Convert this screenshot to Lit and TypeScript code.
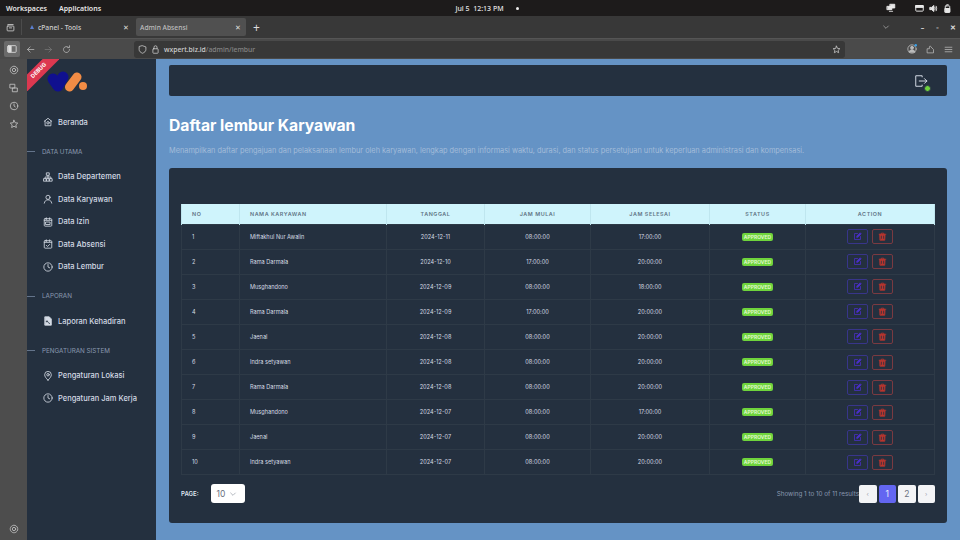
import { LitElement, html, css, svg } from 'lit';
import { customElement } from 'lit/decorators.js';

const icon = (body: unknown, size = 10, stroke = 'currentColor', sw = 2) => html`
  <svg width=${size} height=${size} viewBox="0 0 24 24" fill="none" stroke=${stroke} stroke-width=${sw}
    stroke-linecap="round" stroke-linejoin="round">${body}</svg>`;

const icons = {
  home: svg`<path d="M3 10.500 12 3l9 7.500"/><path d="M5 9v12h14V9"/><circle cx="12" cy="14" r="3"/>`,
  org: svg`<rect x="9" y="2" width="6" height="6"/><rect x="2" y="16" width="6" height="6"/><rect x="16" y="16" width="6" height="6"/><rect x="9" y="16" width="6" height="6"/><path d="M12 8v8M5 16v-4h14v4"/>`,
  user: svg`<circle cx="12" cy="8" r="5"/><path d="M3 22c1-5 4-8 9-8s8 3 9 8"/>`,
  cal: svg`<rect x="3" y="4" width="18" height="18" rx="2"/><path d="M8 2v4M16 2v4M3 8h18M7 12h10v6H7z"/>`,
  calCheck: svg`<rect x="3" y="4" width="18" height="18" rx="2"/><path d="M8 2v4M16 2v4M3 8h18M8 15l3 3 5-5"/>`,
  clock: svg`<circle cx="12" cy="12" r="10"/><path d="M12 6v6l4 2"/>`,
  file: svg`<path fill="currentColor" d="M5 2h10l5 5v15H5z"/><path stroke="#24303f" d="M9 12h2v2H9zM13 16l3 2"/>`,
  pin: svg`<path d="M12 22c-5-5-8-9-8-13a8 8 0 0 1 16 0c0 4-3 8-8 13z"/><circle cx="12" cy="9" r="3"/>`,
  edit: svg`<path d="M12 4H4v16h16v-8"/><path fill="currentColor" d="M10 14v-3l9-9 3 3-9 9z"/>`,
  trash: svg`<path d="M3 6h18M9 6V3h6v3"/><path fill="currentColor" d="M5 6h14l-1 16H6z"/><path stroke="#24303f" d="M9 11v6M15 11v6"/>`,
  logout: svg`<path d="M14 5V3H3v18h11v-2"/><path d="M9 12h13M18 8l4 4-4 4"/>`,
  gear: svg`<circle cx="12" cy="12" r="4"/><circle cx="12" cy="12" r="9" stroke-dasharray="4 2"/>`,
  chevron: svg`<path d="M5 9l7 7 7-7"/>`,
  star: svg`<path d="M12 3l2.800 6 6.200.8-4.600 4.300 1.300 6.400L12 17.300 6.300 20.500l1.300-6.400L3 9.800 9.200 9z"/>`,
  shield: svg`<path d="M12 2l9 3v7c0 5-4 8-9 10-5-2-9-5-9-10V5z"/>`,
  lock: svg`<rect x="5" y="10" width="14" height="12" rx="2"/><path d="M8 10V6a4 4 0 0 1 8 0v4"/>`,
  back: svg`<path d="M21 12H4M11 5l-7 7 7 7"/>`,
  forward: svg`<path d="M3 12h17M13 5l7 7-7 7"/>`,
  reload: svg`<path d="M20 12a8 8 0 1 1-3-6.200"/><path d="M20 2v5h-5"/>`,
  panel: svg`<rect x="2" y="4" width="20" height="16" rx="2"/><path fill="currentColor" d="M3 5h7v14H3z"/>`,
  box: svg`<rect x="3" y="8" width="18" height="13" rx="2"/><path d="M5 4h14M9 13h6"/>`,
  history: svg`<circle cx="12" cy="12" r="9"/><path d="M12 7v5l3 2"/>`,
  sync: svg`<rect x="3" y="3" width="11" height="9"/><rect x="9" y="12" width="11" height="9"/>`,
  ext: svg`<path d="M4 10h5V5a2 2 0 0 1 4 0l7 7v9H4z"/>`,
  menu: svg`<path d="M3 6h18M3 12h18M3 18h18"/>`,
  profile: svg`<circle cx="12" cy="12" r="10"/><circle cx="12" cy="9" r="3.500" fill="currentColor"/><path fill="currentColor" d="M5 19c1-4 4-5 7-5s6 1 7 5z"/><circle cx="21" cy="3" r="3" fill="#3aa0e8" stroke="none"/>`,
  monitor: svg`<rect x="2" y="4" width="20" height="15" rx="2"/><path fill="currentColor" d="M2 4h20v5H2z"/>`,
  speaker: svg`<path fill="currentColor" d="M3 9h4l6-5v16l-6-5H3z"/><path d="M16 9c1 2 1 4 0 6M19 6c2 4 2 8 0 12"/>`,
  battery: svg`<rect x="6" y="5" width="12" height="17" rx="2"/><path d="M10 2h4"/><path fill="currentColor" d="M6 12h12v10H6z"/>`,
  net: svg`<path fill="currentColor" d="M3 8h11v8H3zM10 3h11v9H10z"/><path d="M8 20h8"/>`,
};

const menuData = [
  { items: [{ label: 'Beranda', ic: icons.home }] },
  {
    title: 'DATA UTAMA',
    items: [
      { label: 'Data Departemen', ic: icons.org },
      { label: 'Data Karyawan', ic: icons.user },
      { label: 'Data Izin', ic: icons.cal },
      { label: 'Data Absensi', ic: icons.calCheck },
      { label: 'Data Lembur', ic: icons.clock },
    ],
  },
  { title: 'LAPORAN', items: [{ label: 'Laporan Kehadiran', ic: icons.file }] },
  {
    title: 'PENGATURAN SISTEM',
    items: [
      { label: 'Pengaturan Lokasi', ic: icons.pin },
      { label: 'Pengaturan Jam Kerja', ic: icons.clock },
    ],
  },
];

const rows = [
  ['Miftakhul Nur Awalin', '2024-12-11', '08:00:00', '17:00:00'],
  ['Rama Darmala', '2024-12-10', '17:00:00', '20:00:00'],
  ['Musghandono', '2024-12-09', '08:00:00', '18:00:00'],
  ['Rama Darmala', '2024-12-09', '17:00:00', '20:00:00'],
  ['Jaenal', '2024-12-08', '08:00:00', '20:00:00'],
  ['Indra setyawan', '2024-12-08', '08:00:00', '20:00:00'],
  ['Rama Darmala', '2024-12-08', '08:00:00', '20:00:00'],
  ['Musghandono', '2024-12-07', '08:00:00', '17:00:00'],
  ['Jaenal', '2024-12-07', '08:00:00', '20:00:00'],
  ['Indra setyawan', '2024-12-07', '08:00:00', '20:00:00'],
];

@customElement('app-root')
export class AppRoot extends LitElement {
  static styles = css`
    :host {
      display: flex;
      flex-direction: column;
      width: 960px;
      height: 540px;
      overflow: hidden;
      font-family: Inter, 'Liberation Sans', sans-serif;
      background: #6593c5;
    }
    svg { display: block; flex: none; }

    .topbar {
      height: 16px;
      flex: none;
      background: #1d1b1b;
      color: #e6e6e6;
      font: 600 7px 'Noto Sans', sans-serif;
      display: grid;
      grid-template-columns: 1fr auto 1fr;
      align-items: center;
      padding: 0 6px;
    }
    .topbar .left { display: flex; gap: 12px; }
    .topbar .center { display: flex; align-items: center; gap: 12px; font-weight: 500; margin-left: 14px; }
    .topbar .dot { width: 3px; height: 3px; border-radius: 50%; background: #eee; }
    .topbar .right { display: flex; justify-content: flex-end; align-items: center; gap: 5px; padding-right: 2px; }
    .topbar .right .gap { margin-right: 14px; }

    .tabbar {
      height: 22px;
      flex: none;
      background: #383838;
      color: #cfcfcf;
      display: flex;
      align-items: center;
      font: 500 6.700px 'Noto Sans', sans-serif;
      border-bottom: 1px solid #555;
    }
    .tabbar .rail-btn { width: 21px; display: flex; justify-content: center; color: #ddd; border-right: 1px solid #4c4c4c; height: 16px; align-items: center; margin-right: 2px; }
    .tab { box-sizing: border-box; height: 18px; border-radius: 2px; display: flex; align-items: center; justify-content: space-between; }
    .tab.plain { width: 110px; padding: 0 5px 0 14px; margin-right: 2px; position: relative; }
    .tab.plain i { position: absolute; left: 6px; top: 7px; width: 0; height: 0; border: 2px solid transparent; border-bottom: 4px solid #5b7fd0; border-top: 0; }
    .tab.active { width: 110px; background: #505050; padding: 0 5px 0 4px; color: #bdbdbd; }
    .tab .x { font-size: 7px; color: #ddd; line-height: 1; }
    .plus { font-size: 12px; margin-left: 7px; color: #ddd; font-weight: 400; }
    .winctl { margin-left: auto; display: flex; align-items: center; color: #ddd; }
    .winctl span { width: 15px; text-align: center; font-size: 7px; font-weight: 700; }
    .winctl .chev { margin-right: 25px; color: #bbb; }

    .toolbar {
      height: 20px;
      flex: none;
      background: #4a4a4a;
      color: #bbb;
      display: flex;
      align-items: center;
      padding: 0 0 0 4px;
      gap: 9px;
    }
    .toolbar .side { width: 16px; height: 16px; margin-right: -3px; border-radius: 2px; background: #6a6a6a; display: flex; align-items: center; justify-content: center; color: #e0e0e0; }
    .toolbar .dim { color: #777; }
    .url {
      margin-left: 54px;
      width: 711px;
      height: 17px;
      background: #383838;
      border-radius: 3px;
      display: flex;
      align-items: center;
      gap: 4px;
      padding: 0 4px;
      box-sizing: border-box;
      font: 500 6.800px 'Noto Sans', sans-serif;
      color: #d0d0d0;
    }
    .url span span { color: #858585; }
    .url .star { margin-left: auto; }
    .toolbar .tools { display: flex; gap: 9px; margin-left: 53px; align-items: center; }

    .body { flex: 1; display: flex; min-height: 0; }
    .rail {
      width: 27px;
      flex: none;
      background: #4d4d4d;
      color: #c4c4c4;
      display: flex;
      flex-direction: column;
      align-items: center;
      padding-top: 6px;
      gap: 8px;
    }
    .rail .bottom { margin-top: auto; margin-bottom: 6px; }

    .sidebar {
      width: 129px;
      flex: none;
      background: #24303f;
      position: relative;
      color: #d5dbe5;
      font-size: 7.500px;
      font-weight: 500;
    }
    .ribbon-box { position: absolute; left: 0; top: 0; width: 32px; height: 32px; overflow: hidden; }
    .ribbon {
      position: absolute;
      left: -18px;
      top: 6px;
      width: 60px;
      height: 11.500px;
      line-height: 11.500px;
      background: #dc3850;
      color: #fff;
      font-size: 5.500px;
      font-weight: 700;
      text-align: center;
      transform: rotate(-45deg);
    }
    .logo { box-sizing: border-box; padding: 11px 0 0 19px; height: 33px; }
    .group { padding-top: 12px; }
    .group.first { padding-top: 19px; }
    .section {
      display: flex;
      align-items: center;
      gap: 7px;
      height: 12px;
      font-size: 6.300px;
      font-weight: 400;
      color: #8a99af;
      margin-bottom: 8px;
    }
    .section::before { content: ''; width: 8px; height: 1px; background: #64748b; }
    .item {
      display: flex;
      align-items: center;
      gap: 5px;
      height: 22.500px;
      padding-left: 16px;
    }

    main { flex: 1; min-width: 0; padding: 6px 13px 0 13px; }
    .header {
      height: 31px;
      background: #24303f;
      border-radius: 2px;
      display: flex;
      align-items: center;
      justify-content: flex-end;
      padding-right: 19px;
      color: #dee4ee;
    }
    .logout { position: relative; }
    .logout i { position: absolute; right: -3px; bottom: -4px; width: 5px; height: 5px; border-radius: 50%; background: #6fd43c; border: 1px solid #2d3b4a; }
    h1 { margin: 21px 0 0; font-size: 15.700px; line-height: 18px; font-weight: 700; color: #fff; }
    .desc { margin: 11px 0 0; font-size: 7.350px; line-height: 10px; color: #a3bcd9; white-space: nowrap; }
    .card {
      margin-top: 12px;
      height: 355px;
      box-sizing: border-box;
      background: #24303f;
      border-radius: 3px;
      padding: 36px 12px 0;
    }
    table {
      width: 753px;
      table-layout: fixed;
      border-collapse: collapse;
      font-size: 5.600px;
      color: #d6dbe3;
    }
    th {
      box-sizing: border-box;
      height: 20px;
      padding: 0;
      background: #cff4fc;
      color: #5f7486;
      font-weight: 600;
      font-size: 5.400px;
      letter-spacing: 0.55px;
      border: 1px solid #bfe6ef;
      border-width: 0 1px;
      text-align: center;
    }
    td {
      box-sizing: border-box;
      height: 25.100px;
      padding: 0;
      text-align: center;
      border: 1px solid #2e3a47;
    }
    .l { text-align: left; padding-left: 10px; }
    .badge {
      display: inline-block;
      background: #6fd43c;
      color: #e4f9d6;
      font-size: 5px;
      font-weight: 600;
      line-height: 8px;
      padding: 0 2px;
      border-radius: 2px;
    }
    .actions { display: flex; justify-content: center; gap: 4px; }
    .btn { width: 21px; height: 15px; border-radius: 2px; border: 1px solid; display: flex; align-items: center; justify-content: center; box-sizing: border-box; }
    .btn.edit { border-color: #38358a; color: #4a2fc9; }
    .btn.del { border-color: #7a3a41; color: #b8352f; }
    .foot { display: flex; align-items: center; margin-top: 9px; }
    .foot .page-label { font-size: 6px; font-weight: 600; color: #dee4ee; margin-right: 12px; }
    .select {
      width: 34px;
      height: 19px;
      background: #fff;
      border-radius: 3px;
      color: #6b7280;
      font-size: 8.500px;
      display: flex;
      align-items: center;
      gap: 4px;
      padding-left: 6px;
      box-sizing: border-box;
    }
    .foot .info { margin-left: auto; font-size: 6.300px; color: #8a99af; white-space: nowrap; }
    .pager { display: flex; gap: 2px; }
    .pager div {
      width: 17.500px;
      height: 18px;
      background: #f3f4f6;
      border-radius: 2px;
      color: #6b7280;
      font-size: 8.500px;
      display: flex;
      align-items: center;
      justify-content: center;
    }
    .pager .on { background: #6366f1; color: #e8e9ff; }
    .pager .arrow { font-size: 6px; color: #9ca3af; }
  `;

  render() {
    return html`
      <div class="topbar">
        <div class="left"><span>Workspaces</span><span>Applications</span></div>
        <div class="center"><span>Jul 5&nbsp; 12:13 PM</span><span class="dot"></span></div>
        <div class="right">
          <span class="gap">${icon(icons.net, 10, '#eee', 2)}</span>
          ${icon(icons.monitor, 9, '#eee', 2.500)}
          ${icon(icons.speaker, 9, '#eee', 2.500)}
          ${icon(icons.battery, 9, '#eee', 2.500)}
        </div>
      </div>
      <div class="tabbar">
        <div class="rail-btn">${icon(icons.box, 9)}</div>
        <div class="tab plain"><i></i><span>cPanel - Tools</span><span class="x">✕</span></div>
        <div class="tab active"><span>Admin Absensi</span><span class="x">✕</span></div>
        <span class="plus">+</span>
        <div class="winctl">
          <div class="chev">${icon(icons.chevron, 8)}</div>
          <span>–</span><span>▫</span><span>✕</span>
        </div>
      </div>
      <div class="toolbar">
        <div class="side">${icon(icons.panel, 10)}</div>
        ${icon(icons.back, 9)}
        <span class="dim">${icon(icons.forward, 9)}</span>
        ${icon(icons.reload, 9)}
        <div class="url">
          ${icon(icons.shield, 9)} ${icon(icons.lock, 9)}
          <span>wxpert.biz.id<span>/admin/lembur</span></span>
          <span class="star">${icon(icons.star, 9)}</span>
        </div>
        <div class="tools">
          ${icon(icons.profile, 10)} ${icon(icons.ext, 9)} ${icon(icons.menu, 9)}
        </div>
      </div>
      <div class="body">
        <div class="rail">
          ${icon(icons.gear, 10)} ${icon(icons.sync, 10)} ${icon(icons.history, 10)} ${icon(icons.star, 10)}
          <span class="bottom">${icon(icons.gear, 10)}</span>
        </div>
        <aside class="sidebar">
          <div class="ribbon-box"><div class="ribbon">DEBUG</div></div>
          <div class="logo">
            <svg width="42" height="22" viewBox="0 0 42 22">
              <path d="M7 9 L12 16 L17 7" fill="none" stroke="#10108f" stroke-width="11" stroke-linecap="round" stroke-linejoin="round"/>
              <path d="M23.500 17 L31 7" fill="none" stroke="#f28c45" stroke-width="9" stroke-linecap="round"/>
              <circle cx="37" cy="16" r="4" fill="#f28c45"/>
            </svg>
          </div>
          ${menuData.map(
            (g, i) => html`
              <div class="group ${i === 0 ? 'first' : ''}">
                ${g.title ? html`<div class="section">${g.title}</div>` : ''}
                ${g.items.map(
                  (it) => html`<div class="item">${icon(it.ic, 10)}<span>${it.label}</span></div>`
                )}
              </div>
            `
          )}
        </aside>
        <main>
          <div class="header">
            <div class="logout">${icon(icons.logout, 14, 'currentColor', 1.600)}<i></i></div>
          </div>
          <h1>Daftar lembur Karyawan</h1>
          <p class="desc">
            Menampilkan daftar pengajuan dan pelaksanaan lembur oleh karyawan, lengkap dengan informasi waktu, durasi, dan status persetujuan untuk keperluan administrasi dan kompensasi.
          </p>
          <div class="card">
            <table>
              <colgroup>
                <col style="width:58px" /><col style="width:147px" /><col style="width:98px" />
                <col style="width:106px" /><col style="width:119px" /><col style="width:96px" /><col style="width:129px" />
              </colgroup>
              <thead>
                <tr>
                  <th class="l">NO</th><th class="l">NAMA KARYAWAN</th><th>TANGGAL</th><th>JAM MULAI</th>
                  <th>JAM SELESAI</th><th>STATUS</th><th>ACTION</th>
                </tr>
              </thead>
              <tbody>
                ${rows.map(
                  (r, i) => html`
                    <tr>
                      <td class="l">${i + 1}</td>
                      <td class="l">${r[0]}</td>
                      <td>${r[1]}</td>
                      <td>${r[2]}</td>
                      <td>${r[3]}</td>
                      <td><span class="badge">APPROVED</span></td>
                      <td>
                        <div class="actions">
                          <div class="btn edit">${icon(icons.edit, 9)}</div>
                          <div class="btn del">${icon(icons.trash, 9)}</div>
                        </div>
                      </td>
                    </tr>
                  `
                )}
              </tbody>
            </table>
            <div class="foot">
              <span class="page-label">PAGE:</span>
              <div class="select"><span>10</span>${icon(icons.chevron, 8, '#6b7280', 1.500)}</div>
              <span class="info">Showing 1 to 10 of 11 results</span>
              <div class="pager">
                <div class="arrow">‹</div><div class="on">1</div><div>2</div><div class="arrow">›</div>
              </div>
            </div>
          </div>
        </main>
      </div>
    `;
  }
}
